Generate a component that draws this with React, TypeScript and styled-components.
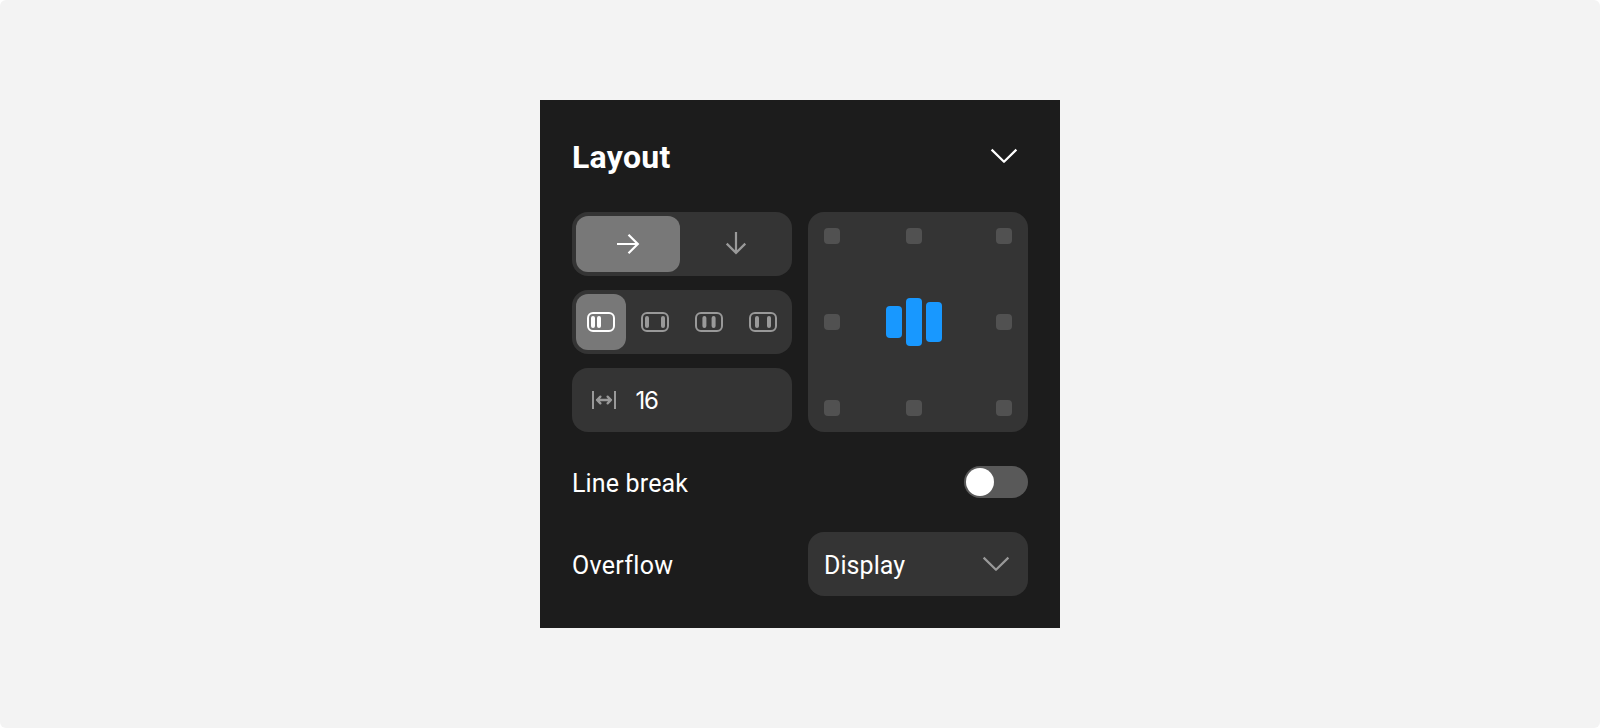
import React from "react";
import styled, { createGlobalStyle } from "styled-components";

const GlobalStyle = createGlobalStyle`
  *, *::before, *::after { box-sizing: border-box; }
  body { margin: 0; background: #fff; }
  button { font: inherit; color: inherit; border: 0; padding: 0; background: none; }
`;

const Stage = styled.main`
  display: flex;
  align-items: center;
  justify-content: center;
  height: 728px;
  background: #f3f3f3;
  border-radius: 6px;
  font-family: Roboto, "Noto Sans", sans-serif;
  font-size: 25px;
  font-weight: 370;
  font-variant-ligatures: none;
  color: #fff;
`;

const Panel = styled.section`
  display: flex;
  flex-direction: column;
  width: 520px;
  height: 528px;
  padding: 32px;
  background: #1c1c1c;
`;

const Header = styled.header`
  display: flex;
  align-items: center;
  justify-content: space-between;
  height: 48px;
  padding-right: 11px;
`;

const Title = styled.h2`
  margin: 0;
  padding-top: 2px;
  font-size: 32px;
  line-height: 48px;
  font-weight: 700;
  letter-spacing: 0.3px;
`;

const Controls = styled.div`
  display: grid;
  grid-template-columns: 220px 220px;
  column-gap: 16px;
  margin-top: 32px;
`;

const Stack = styled.div`
  display: flex;
  flex-direction: column;
  gap: 14px;
`;

const Segmented = styled.div`
  display: flex;
  gap: 4px;
  height: 64px;
  padding: 4px;
  border-radius: 16px;
  background: #343434;
`;

const Segment = styled.button<{ $active?: boolean }>`
  display: flex;
  flex: 1;
  align-items: center;
  justify-content: center;
  border-radius: 12px;
  background: ${(p) => (p.$active ? "#787878" : "transparent")};
  color: ${(p) => (p.$active ? "#fff" : "#999")};
`;

const GapField = styled.div`
  display: flex;
  align-items: center;
  gap: 19.5px;
  height: 64px;
  padding-left: 20px;
  border-radius: 16px;
  background: #343434;
`;

const GapValue = styled.span`
  font-family: Inter, sans-serif;
  font-size: 24px;
  font-weight: 370;
  line-height: 32px;
  padding-top: 1px;
  letter-spacing: -1.3px;
`;

const AlignPad = styled.div`
  display: grid;
  grid-template-columns: 62px 56px 70px;
  grid-template-rows: 16px 48px 16px;
  align-content: space-between;
  justify-items: center;
  align-items: center;
  height: 220px;
  padding: 16px;
  border-radius: 16px;
  background: #343434;
`;

const Dot = styled.span<{ $side?: "start" | "end" }>`
  justify-self: ${(p) => p.$side ?? "center"};
  width: 16px;
  height: 16px;
  border-radius: 4px;
  background: #515151;
`;

const Bars = styled.span`
  display: flex;
  align-items: center;
  gap: 4px;
`;

const Bar = styled.span<{ $height: number }>`
  width: 16px;
  height: ${(p) => p.$height}px;
  border-radius: 4px;
  background: #1898ff;
`;

const Row = styled.div<{ $height: number }>`
  display: flex;
  align-items: center;
  justify-content: space-between;
  height: ${(p) => p.$height}px;
  margin-top: 34px;
`;

const Label = styled.span<{ $spacing?: number }>`
  line-height: 32px;
  padding-top: 4px;
  letter-spacing: ${(p) => p.$spacing ?? 0}px;
`;

const Toggle = styled.button`
  display: flex;
  align-items: center;
  width: 64px;
  height: 32px;
  padding: 2px;
  border-radius: 16px;
  background: #595959;
`;

const Knob = styled.span`
  width: 28px;
  height: 28px;
  border-radius: 50%;
  background: #fff;
`;

const Select = styled.button`
  display: flex;
  align-items: center;
  justify-content: space-between;
  width: 220px;
  height: 64px;
  padding: 0 19px 0 16px;
  border-radius: 16px;
  background: #343434;
`;

const Chevron = ({ color }: { color: string }) => (
  <svg width="26" height="14" viewBox="0 0 26 14" fill="none" stroke={color} strokeWidth="2.2" overflow="visible">
    <path d="M0.6 0.6L13 12.8L25.4 0.6" strokeLinejoin="round" />
  </svg>
);

const ArrowRight = () => (
  <svg width="24" height="24" viewBox="0 0 24 24" fill="none" stroke="currentColor" strokeWidth="2.2">
    <path d="M1 12H22.5M12.5 2.7L21.8 12L12.5 21.3" />
  </svg>
);

const ArrowDown = () => (
  <svg width="24" height="24" viewBox="0 0 24 24" fill="none" stroke="currentColor" strokeWidth="2.2">
    <path d="M12 0V21.5M2.7 11.6L12 20.9L21.3 11.6" />
  </svg>
);

const Distribute = ({ bars }: { bars: [number, number] }) => (
  <svg width="28" height="20" viewBox="0 0 28 20" fill="none">
    <rect x="1" y="1" width="26" height="18" rx="5" stroke="currentColor" strokeWidth="2" />
    {bars.map((x) => (
      <rect key={x} x={x} y="4" width="4" height="12" rx="2" fill="currentColor" />
    ))}
  </svg>
);

const SpacingIcon = () => (
  <svg width="24" height="18" viewBox="0 0 24 18" fill="none" stroke="#999" strokeWidth="2">
    <path d="M1 0V18M23 0V18" />
    <path d="M5 9H19M8.4 5.6L5 9L8.4 12.4M15.6 5.6L19 9L15.6 12.4" strokeWidth="2.3" strokeLinecap="round" strokeLinejoin="round" />
  </svg>
);

const distributions: [number, number][] = [[4, 10], [4, 20], [7.4, 16.6], [6, 18]];

export default function App() {
  return (
    <>
      <GlobalStyle />
      <Stage>
        <Panel>
          <Header>
            <Title>Layout</Title>
            <Chevron color="#fff" />
          </Header>
          <Controls>
            <Stack>
              <Segmented>
                <Segment $active><ArrowRight /></Segment>
                <Segment><ArrowDown /></Segment>
              </Segmented>
              <Segmented>
                {distributions.map((bars, i) => (
                  <Segment key={i} $active={i === 0}><Distribute bars={bars} /></Segment>
                ))}
              </Segmented>
              <GapField>
                <SpacingIcon />
                <GapValue>16</GapValue>
              </GapField>
            </Stack>
            <AlignPad>
              <Dot $side="start" /><Dot /><Dot $side="end" />
              <Dot $side="start" />
              <Bars>
                <Bar $height={32} />
                <Bar $height={48} />
                <Bar $height={40} />
              </Bars>
              <Dot $side="end" />
              <Dot $side="start" /><Dot /><Dot $side="end" />
            </AlignPad>
          </Controls>
          <Row $height={32}>
            <Label $spacing={0.15}>Line break</Label>
            <Toggle><Knob /></Toggle>
          </Row>
          <Row $height={64}>
            <Label $spacing={0.3}>Overflow</Label>
            <Select>
              <Label $spacing={0.05}>Display</Label>
              <Chevron color="#999" />
            </Select>
          </Row>
        </Panel>
      </Stage>
    </>
  );
}
